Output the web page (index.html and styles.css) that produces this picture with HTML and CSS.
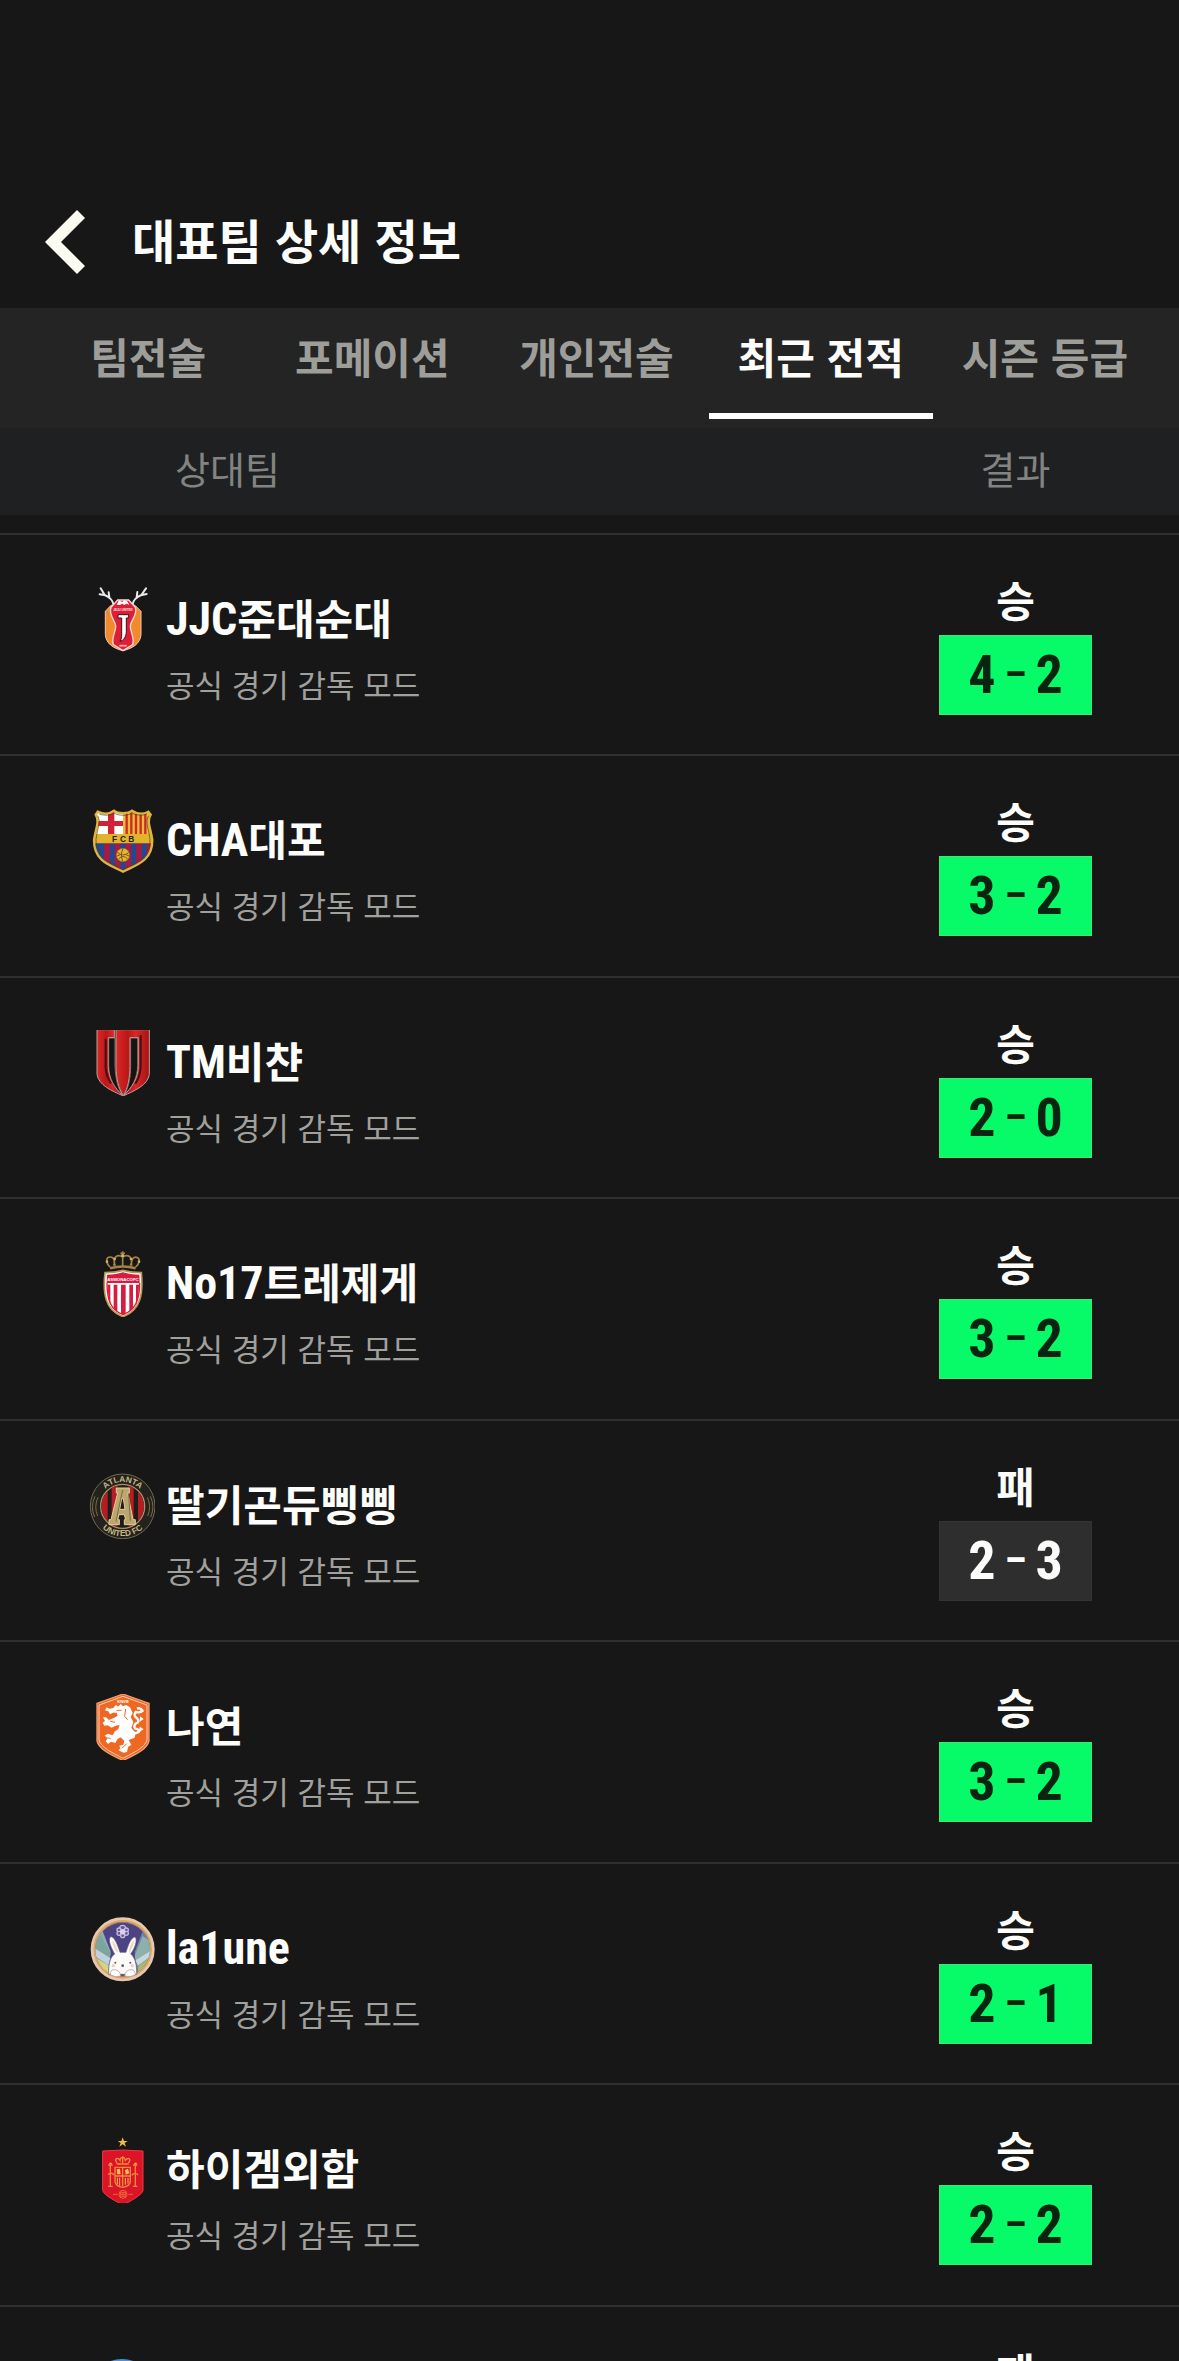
FILE: index.html
```html
<!DOCTYPE html>
<html lang="ko">
<head>
    <meta charset="UTF-8">
    <meta name="viewport" content="width=device-width, initial-scale=1.0">
    <title>대표팀 상세 정보</title>
    <link rel="stylesheet" href="styles.css">
</head>
<body>
    <header class="page-header">
        <button class="back-button" type="button" aria-label="뒤로">
            <svg viewBox="0 0 40 64" class="back-icon"><path fill="#fbfbf1" d="M0 32 32 0l8 8-24 24 24 24-8 8z"/></svg>
        </button>
        <h1 class="page-title">대표팀 상세 정보</h1>
    </header>

    <nav class="tabs">
        <a class="tab" href="#tactics">팀전술</a>
        <a class="tab" href="#formation">포메이션</a>
        <a class="tab" href="#personal">개인전술</a>
        <a class="tab active" href="#recent">최근 전적</a>
        <a class="tab" href="#season">시즌 등급</a>
    </nav>

    <main class="records">
        <table class="record-table">
            <thead>
                <tr>
                    <th class="col-team">상대팀</th>
                    <th class="col-result">결과</th>
                </tr>
            </thead>
            <tbody>
                <tr>
                    <td>
                        <div class="team">
                            <svg class="crest" viewBox="26 51 198 198">
                                <g fill="none" stroke="#e9e9e9" stroke-width="6" stroke-linecap="round" stroke-linejoin="round">
                                    <path d="M100 105C98 92 86 80 73 75L61 55M75 76 58 73M87 82 85 67"/>
                                    <path d="M156 105C158 92 170 80 183 75L197 55M181 76 199 72M169 82 171 66"/>
                                </g>
                                <path fill="#f08a2c" stroke="#f3c9b5" stroke-width="3" d="M75 124 92 106H164L182 124V194C180 220 158 235 128 242 98 235 77 220 75 194z"/>
                                <path fill="#dc1f36" stroke="#ffd9d9" stroke-width="4" d="M92 112 112 90H145L165 112C172 135 152 150 150 167 149 187 164 203 157 224L128 242 99 224C92 203 107 187 106 167 104 150 84 135 92 112z"/>
                                <path fill="#fff" d="M109 104 116 91 126 96 132 90 140 93 147 104 138 101 132 105 126 101 118 105z"/>
                                <text x="128" y="123" class="crest-text" font-size="9" fill="#ffe3e3">JEJU UNITED</text>
                                <path fill="#fff" stroke="#3c1118" stroke-width="3" d="M113 134H145V144H138V184C138 201 129 212 119 214 125 205 124 196 124 184V144H113z"/>
                                <path stroke="#ffb7b7" stroke-width="5" d="M117 227H139"/>
                            </svg>
                            <strong class="name"><span class="latin">JJC</span>준대순대</strong>
                            <span class="mode">공식 경기 감독 모드</span>
                        </div>
                    </td>
                    <td>
                        <div class="result">
                            <span class="outcome">승</span>
                            <div class="score win"><span>4</span><span class="dash">–</span><span>2</span></div>
                        </div>
                    </td>
                </tr>
                <tr>
                    <td>
                        <div class="team">
                            <svg class="crest" viewBox="26 40 198 198">
                                <defs>
                                    <clipPath id="fcb"><path d="M52 51C72 60 90 57 101 48 113 58 143 58 155 48 168 57 187 60 204 51L211 60C198 80 211 100 216 136 217 200 165 212 128 231 90 212 40 200 41 136 46 100 59 80 46 60z"/></clipPath>
                                </defs>
                                <g clip-path="url(#fcb)">
                                    <path fill="#fff" d="M36 40H128V122H36z"/>
                                    <path fill="#d02135" d="M83 40H102V122H83zM36 79H128V94H36z"/>
                                    <path fill="#eebc34" d="M128 40H224V122H128z"/>
                                    <path stroke="#c92930" stroke-width="7" d="M139 40V122M153 40V122M167 40V122M181 40V122M195 40V122"/>
                                    <path fill="#25478f" d="M36 145H224V238H36z"/>
                                    <path stroke="#a61b43" stroke-width="17" d="M80 145V238M112 145V238M144 145V238M176 145V238M208 145V180"/>
                                    <path fill="#e2b42d" d="M36 118H224V146H36z"/>
                                </g>
                                <path fill="none" stroke="#dfb63b" stroke-width="7" d="M52 51C72 60 90 57 101 48 113 58 143 58 155 48 168 57 187 60 204 51L211 60C198 80 211 100 216 136 217 200 165 212 128 231 90 212 40 200 41 136 46 100 59 80 46 60z"/>
                                <path fill="none" stroke="#4b421c" stroke-width="2" d="M57 58C75 64 92 62 101 55 113 64 143 64 155 55 167 62 184 64 199 58M52 63C62 82 52 96 47 134 47 191 93 206 128 224 163 206 209 191 209 134 204 96 194 82 205 63"/>
                                <g class="crest-text" font-size="25" fill="#25220c">
                                    <text x="103" y="141">F</text>
                                    <text x="128" y="141">C</text>
                                    <text x="153" y="141">B</text>
                                </g>
                                <circle cx="128" cy="181" r="20" fill="#e5b732" stroke="#8f6b1d" stroke-width="2"/>
                                <path fill="none" stroke="#74571a" stroke-width="3" d="M111 173Q127 188 145 174M115 193Q128 178 142 193M128 162Q119 178 127 200M110 184 120 180M146 184 135 179"/>
                            </svg>
                            <strong class="name"><span class="latin">CHA</span>대포</strong>
                            <span class="mode">공식 경기 감독 모드</span>
                        </div>
                    </td>
                    <td>
                        <div class="result">
                            <span class="outcome">승</span>
                            <div class="score win"><span>3</span><span class="dash">–</span><span>2</span></div>
                        </div>
                    </td>
                </tr>
                <tr>
                    <td>
                        <div class="team">
                            <svg class="crest" viewBox="26 44 198 198">
                                <defs>
                                    <linearGradient id="tm-red">
                                        <stop offset="0" stop-color="#dc2827"/>
                                        <stop offset=".35" stop-color="#ba1719"/>
                                        <stop offset=".6" stop-color="#d82728"/>
                                        <stop offset="1" stop-color="#a31316"/>
                                    </linearGradient>
                                </defs>
                                <path fill="#171012" d="M50 43H207V177C204 208 162 228 129 243 96 228 53 208 50 177z"/>
                                <g fill="url(#tm-red)" stroke="#b9a098" stroke-width="3" stroke-linejoin="round">
                                    <path d="M50 43H102V67H84V150C84 190 105 219 127 241 95 227 54 209 50 177z"/>
                                    <path d="M107 43H207V177C203 209 162 227 130 241 152 219 174 190 174 150V67H149V150C149 190 142 220 129 241 115 220 107 190 107 150z"/>
                                </g>
                                <path fill="#171214" stroke="#b9a098" stroke-width="2" d="M85 68H104V150C105 191 114 220 126 238 103 218 85 190 85 150zM151 68H172V150C172 190 153 219 132 237 144 218 151 190 151 150z"/>
                                <path fill="none" stroke="#4b0d10" stroke-width="6" d="M76 70V158Q79 186 92 204M181 60V157Q179 184 165 205"/>
                            </svg>
                            <strong class="name"><span class="latin">TM</span>비챤</strong>
                            <span class="mode">공식 경기 감독 모드</span>
                        </div>
                    </td>
                    <td>
                        <div class="result">
                            <span class="outcome">승</span>
                            <div class="score win"><span>2</span><span class="dash">–</span><span>0</span></div>
                        </div>
                    </td>
                </tr>
                <tr>
                    <td>
                        <div class="team">
                            <svg class="crest" viewBox="26 34 198 198">
                                <g fill="none" stroke="#a48343" stroke-width="5">
                                    <path d="M89 82C74 67 77 51 91 52 106 54 103 70 100 78M105 78C93 52 113 42 127 52 142 42 162 52 150 78M154 78C151 63 157 50 169 53 181 57 178 71 166 82M127 50V80M127 35V50M120 41H134"/>
                                    <path stroke-width="8" d="M89 86Q128 75 166 86"/>
                                </g>
                                <g fill="#d0b16a">
                                    <circle cx="80" cy="66" r="4"/><circle cx="103" cy="58" r="4"/><circle cx="127" cy="48" r="5"/><circle cx="152" cy="58" r="4"/><circle cx="176" cy="66" r="4"/>
                                </g>
                                <path fill="#fff" stroke="#b79850" stroke-width="5" d="M74 99C97 99 111 97 128 92 145 97 159 99 183 99 189 161 182 211 128 231 74 211 67 161 74 99z"/>
                                <path fill="#d81c3f" d="M80 105C99 105 113 103 128 98 143 103 158 105 177 105L178 130H79z"/>
                                <path fill="#d81c3f" d="M82 135H90V195Q83 178 82 135zM100 135H111V216L100 208zM122 135H136V222L129 225 122 222zM147 135H158V208L147 216zM167 135H176Q175 178 167 196z"/>
                                <path fill="none" stroke="#d81c3f" stroke-width="4" d="M80 130C80 183 92 211 128 225 164 211 178 183 178 130"/>
                                <text x="128" y="123" class="crest-text" font-size="13" fill="#fff">ASMONACOFC</text>
                            </svg>
                            <strong class="name"><span class="latin">No17</span>트레제게</strong>
                            <span class="mode">공식 경기 감독 모드</span>
                        </div>
                    </td>
                    <td>
                        <div class="result">
                            <span class="outcome">승</span>
                            <div class="score win"><span>3</span><span class="dash">–</span><span>2</span></div>
                        </div>
                    </td>
                </tr>
                <tr>
                    <td>
                        <div class="team">
                            <svg class="crest" viewBox="26 38 198 198">
                                <defs>
                                    <clipPath id="atl"><circle cx="127" cy="138" r="64"/></clipPath>
                                    <path id="atl-top" d="M54 138A73 73 0 0 1 200 138"/>
                                    <path id="atl-bottom" d="M37 138A90 90 0 0 0 217 138"/>
                                </defs>
                                <circle cx="127" cy="138" r="97" fill="#24221d" stroke="#716a50" stroke-width="3"/>
                                <circle cx="127" cy="138" r="66" fill="#211b1a" stroke="#a59668" stroke-width="4"/>
                                <g clip-path="url(#atl)">
                                    <path fill="#b51d25" d="M63 74H82V205H63zM94 74H111V205H94zM145 74H160V205H145zM173 74H195V205H173z"/>
                                </g>
                                <path fill="#bba66e" stroke="#e0d09b" stroke-width="3" d="M108 83H147V98H142L158 178H165V193H132V178H136L132 163H116L112 178H117V193H86V178H92L112 98H108zM124 115 118 147H134L129 115z"/>
                                <path fill="none" stroke="#796c46" stroke-width="3" d="M127 89 107 183M145 104 150 181M44 108Q29 139 43 170M53 111Q40 139 52 167M210 108Q225 139 211 170M201 111Q214 139 202 167"/>
                                <g class="crest-text" font-size="25" fill="#c5b887">
                                    <text><textPath href="#atl-top" startOffset="50%">ATLANTA</textPath></text>
                                    <text><textPath href="#atl-bottom" startOffset="50%">UNITED FC</textPath></text>
                                </g>
                            </svg>
                            <strong class="name">딸기곤듀삥삥</strong>
                            <span class="mode">공식 경기 감독 모드</span>
                        </div>
                    </td>
                    <td>
                        <div class="result">
                            <span class="outcome">패</span>
                            <div class="score loss"><span>2</span><span class="dash">–</span><span>3</span></div>
                        </div>
                    </td>
                </tr>
                <tr>
                    <td>
                        <div class="team">
                            <svg class="crest" viewBox="26 42 198 198">
                                <path fill="#ef6823" stroke="#f5a06e" stroke-width="4" d="M50 70Q96 54 128 42 160 54 206 70V183C199 210 162 224 128 242 94 224 57 210 50 183z"/>
                                <path fill="none" stroke="#fff" stroke-width="2" d="M56 75Q98 60 128 49 158 60 200 75V180C194 203 161 217 128 235 95 217 62 203 56 180z"/>
                                <text x="128" y="69" class="crest-text" font-size="12" fill="#fff">KNVB</text>
                                <path fill="#fff" d="M99 84 107 74 113 80 121 72 128 79 137 75 149 82 157 99 151 111 159 126 153 144 166 158 163 173 145 180 153 194 143 201 140 216 129 218 115 211 120 205 117 197 129 194 132 182 120 172 111 178 105 189 92 185 83 192 76 184 82 174 73 167 82 161 97 166 104 154 114 147 118 135 106 137 94 143 82 136 72 137 67 128 74 123 68 112 77 112 86 120 102 113 112 107 109 98 98 98 89 103 84 94 74 91 79 82 88 86z"/>
                                <path fill="none" stroke="#fff" stroke-width="7" stroke-linejoin="round" d="M153 159Q171 162 177 153 173 146 165 146 158 139 167 130 180 127 170 115 158 108 166 96 181 100 186 91 180 82 170 86"/>
                                <path fill="#fff" d="M181 83 191 94 181 100zM179 109 190 117 178 125zM178 140 190 148 176 156z"/>
                                <path fill="none" stroke="#ef6823" stroke-width="3" d="M109 91 124 91M136 87 133 109 142 119M91 176 82 173M139 191 125 205M90 124 104 127"/>
                            </svg>
                            <strong class="name">나연</strong>
                            <span class="mode">공식 경기 감독 모드</span>
                        </div>
                    </td>
                    <td>
                        <div class="result">
                            <span class="outcome">승</span>
                            <div class="score win"><span>3</span><span class="dash">–</span><span>2</span></div>
                        </div>
                    </td>
                </tr>
                <tr>
                    <td>
                        <div class="team">
                            <svg class="crest" viewBox="26 32 198 198">
                                <defs><clipPath id="bunny"><circle cx="127" cy="132" r="82"/></clipPath></defs>
                                <circle cx="127" cy="132" r="92" fill="#dca665" stroke="#e7c7b0" stroke-width="8"/>
                                <circle cx="127" cy="132" r="81" fill="#4b4383" stroke="#9d7264" stroke-width="3"/>
                                <g clip-path="url(#bunny)">
                                    <path fill="#8eaabc" d="M40 100 66 75 91 139 82 220H35z"/>
                                    <path fill="#7ca69b" d="M42 105 62 89 91 147 86 162 48 134z"/>
                                    <path fill="#c1d0dd" d="M45 130 90 158 84 178 44 153z"/>
                                    <path fill="#d7d47b" d="M44 157 84 180 84 212 54 185z"/>
                                    <path fill="#6e84a2" d="M217 100 188 75 163 139 172 220H220z"/>
                                    <path fill="#8cb1aa" d="M212 109 187 92 163 151 166 164 215 132z"/>
                                    <path fill="#c7d8dd" d="M215 133 165 165 173 181 213 151z"/>
                                    <path fill="#aab96e" d="M211 154 174 182 172 211 206 180z"/>
                                </g>
                                <g fill="#5e579d" stroke="#c8b9dd" stroke-width="4">
                                    <circle cx="127" cy="69" r="9"/><circle cx="116" cy="74" r="6"/><circle cx="138" cy="74" r="6"/><circle cx="116" cy="84" r="6"/><circle cx="138" cy="84" r="6"/><circle cx="127" cy="91" r="6"/>
                                </g>
                                <circle cx="127" cy="79" r="8" fill="#ddd1e8"/>
                                <path fill="#fbfaf7" stroke="#6a5d76" stroke-width="2" d="M103 146C93 129 82 104 90 95 101 89 113 122 119 141H137C143 120 153 94 164 95 173 103 163 130 151 146 163 155 170 177 169 207H85C84 181 88 156 103 146z"/>
                                <path fill="#ecd9bf" d="M108 139C101 127 93 109 97 107 102 109 111 127 113 139zM146 139C147 125 155 107 160 108 162 116 154 131 148 142z"/>
                                <g fill="#625267"><circle cx="105" cy="172" r="3"/><circle cx="150" cy="172" r="3"/><circle cx="127" cy="181" r="4"/></g>
                                <g fill="#ebcfc7"><circle cx="99" cy="181" r="5"/><circle cx="156" cy="181" r="5"/></g>
                                <path fill="#fff" stroke="#a28a90" stroke-width="2" d="M90 208Q90 192 103 193 119 195 121 212 105 218 90 208zM165 208Q164 192 151 193 135 195 133 212 151 218 165 208z"/>
                            </svg>
                            <strong class="name"><span class="latin">la1une</span></strong>
                            <span class="mode">공식 경기 감독 모드</span>
                        </div>
                    </td>
                    <td>
                        <div class="result">
                            <span class="outcome">승</span>
                            <div class="score win"><span>2</span><span class="dash">–</span><span>1</span></div>
                        </div>
                    </td>
                </tr>
                <tr>
                    <td>
                        <div class="team">
                            <svg class="crest" viewBox="26 36 198 198">
                                <path fill="#efbd3f" d="M127 37 131 48 142 48 133 54 137 65 127 58 117 65 121 54 112 48 123 48z"/>
                                <path fill="#dc1427" stroke="#ef3845" stroke-width="3" d="M67 78Q127 72 188 78V197Q184 212 128 240 71 212 67 197z"/>
                                <g fill="none" stroke="#ef8a3c" stroke-width="4">
                                    <path d="M104 127H150V170Q148 184 127 187 106 184 104 170zM127 128V184M105 153H149M109 117H145M110 114C99 100 113 96 119 106 120 94 134 94 135 106 143 96 155 101 144 114M127 93V116"/>
                                    <path d="M90 120V184M84 120H97M83 184H97M165 120V184M158 120H171M158 184H171M83 149Q92 139 101 150M154 151Q164 140 173 150"/>
                                    <circle cx="128" cy="208" r="12" stroke-width="2"/>
                                    <path stroke-width="2" d="M120 202H136V214H120zM128 202V214M120 208H136M98 208H112M144 208H158"/>
                                </g>
                                <path fill="#f2bd59" d="M109 133 119 131 121 148H110zM134 135 143 131 147 145 136 149zM87 113H94V118H87zM162 113H169V118H162z"/>
                                <path stroke="#f2bd59" stroke-width="3" d="M111 158V178M118 158V182M135 159V179M143 159V176"/>
                            </svg>
                            <strong class="name">하이겜외함</strong>
                            <span class="mode">공식 경기 감독 모드</span>
                        </div>
                    </td>
                    <td>
                        <div class="result">
                            <span class="outcome">승</span>
                            <div class="score win"><span>2</span><span class="dash">–</span><span>2</span></div>
                        </div>
                    </td>
                </tr>
                <tr>
                    <td>
                        <div class="team">
                            <svg class="crest" viewBox="0 0 66 66"><circle cx="33" cy="33" r="33" fill="#4f8fe0"/></svg>
                        </div>
                    </td>
                    <td>
                        <div class="result">
                            <span class="outcome">패</span>
                        </div>
                    </td>
                </tr>
            </tbody>
        </table>
    </main>
</body>
</html>
```
FILE: styles.css
```css
* {
    box-sizing: border-box;
}

body {
    margin: 0;
    height: 100vh;
    overflow: hidden;
    display: flex;
    flex-direction: column;
    background-color: #171717;
    color: #fdfdfb;
    font-family: "Noto Sans CJK KR", sans-serif;
}

/* header */
.page-header {
    display: flex;
    align-items: flex-start;
    gap: 47px;
    padding: 210px 45px 34px;
    flex-shrink: 0;
}

.back-button {
    padding: 0;
    border: none;
    background: none;
    cursor: pointer;
}

.back-icon {
    display: block;
    width: 40px;
    height: 64px;
}

.page-title {
    margin: 0;
    font-size: 47px;
    line-height: 58px;
    font-weight: 700;
}

/* tabs */
.tabs {
    display: grid;
    grid-template-columns: repeat(5, 1fr);
    height: 120px;
    flex-shrink: 0;
    padding: 0 22px 9px 36px;
    background-color: #242424;
}

.tab {
    padding-top: 18px;
    border-bottom: 6px solid transparent;
    color: #9d9d9a;
    font-size: 42px;
    line-height: 60px;
    font-weight: 700;
    text-align: center;
    text-decoration: none;
    white-space: nowrap;
}

.tab.active {
    color: #fdfdfb;
    border-bottom-color: #fff;
}

/* match records */
.records {
    flex: 1;
    min-height: 0;
    overflow: hidden;
}

.record-table {
    width: 100%;
    border-spacing: 0;
}

.record-table th {
    height: 87px;
    padding: 0 0 7px;
    background-color: #1e2021;
    color: #838482;
    font-size: 38px;
    line-height: 56px;
    font-weight: 400;
}

.record-table .col-team {
    padding-left: 175px;
    text-align: left;
}

.record-table .col-result {
    width: 327px;
}

.record-table tbody::before {
    content: "";
    display: block;
    height: 18px;
}

.record-table tbody tr {
    height: 221px;
}

.record-table tbody tr:nth-child(even) {
    height: 222px;
}

.record-table td {
    padding: 0;
    border-top: 2px solid #303030;
    vertical-align: top;
}

.team {
    display: grid;
    grid-template-columns: 66px 1fr;
    column-gap: 11px;
    row-gap: 6px;
    padding: 52px 0 0 89px;
}

.crest {
    width: 66px;
    height: 66px;
}

.crest-text {
    font-family: "Liberation Sans", sans-serif;
    font-weight: 700;
    text-anchor: middle;
}

.name {
    font-size: 42px;
    line-height: 60px;
    font-weight: 700;
}

.latin {
    font-family: "Roboto Condensed", Roboto, sans-serif;
    font-size: 46px;
    line-height: 48px;
}

.mode {
    grid-column: 2;
    color: #a0a09d;
    font-size: 31px;
    line-height: 50px;
}

.result {
    display: flex;
    flex-direction: column;
    align-items: center;
    gap: 6px;
    padding-top: 34px;
}

.outcome {
    font-size: 42px;
    line-height: 60px;
    font-weight: 700;
}

.score {
    display: flex;
    justify-content: center;
    align-items: center;
    gap: 9px;
    width: 153px;
    border: 1px solid #3ee977;
    font-family: "Roboto Condensed", Roboto, sans-serif;
    font-size: 54px;
    line-height: 78px;
    font-weight: 700;
}

.score .dash {
    font-size: 40px;
}

.score.win {
    background-color: #07fa68;
    color: #0b2412;
}

.score.loss {
    background-color: #2e2e2e;
    border-color: #333;
    color: #fdfdfb;
}
```
